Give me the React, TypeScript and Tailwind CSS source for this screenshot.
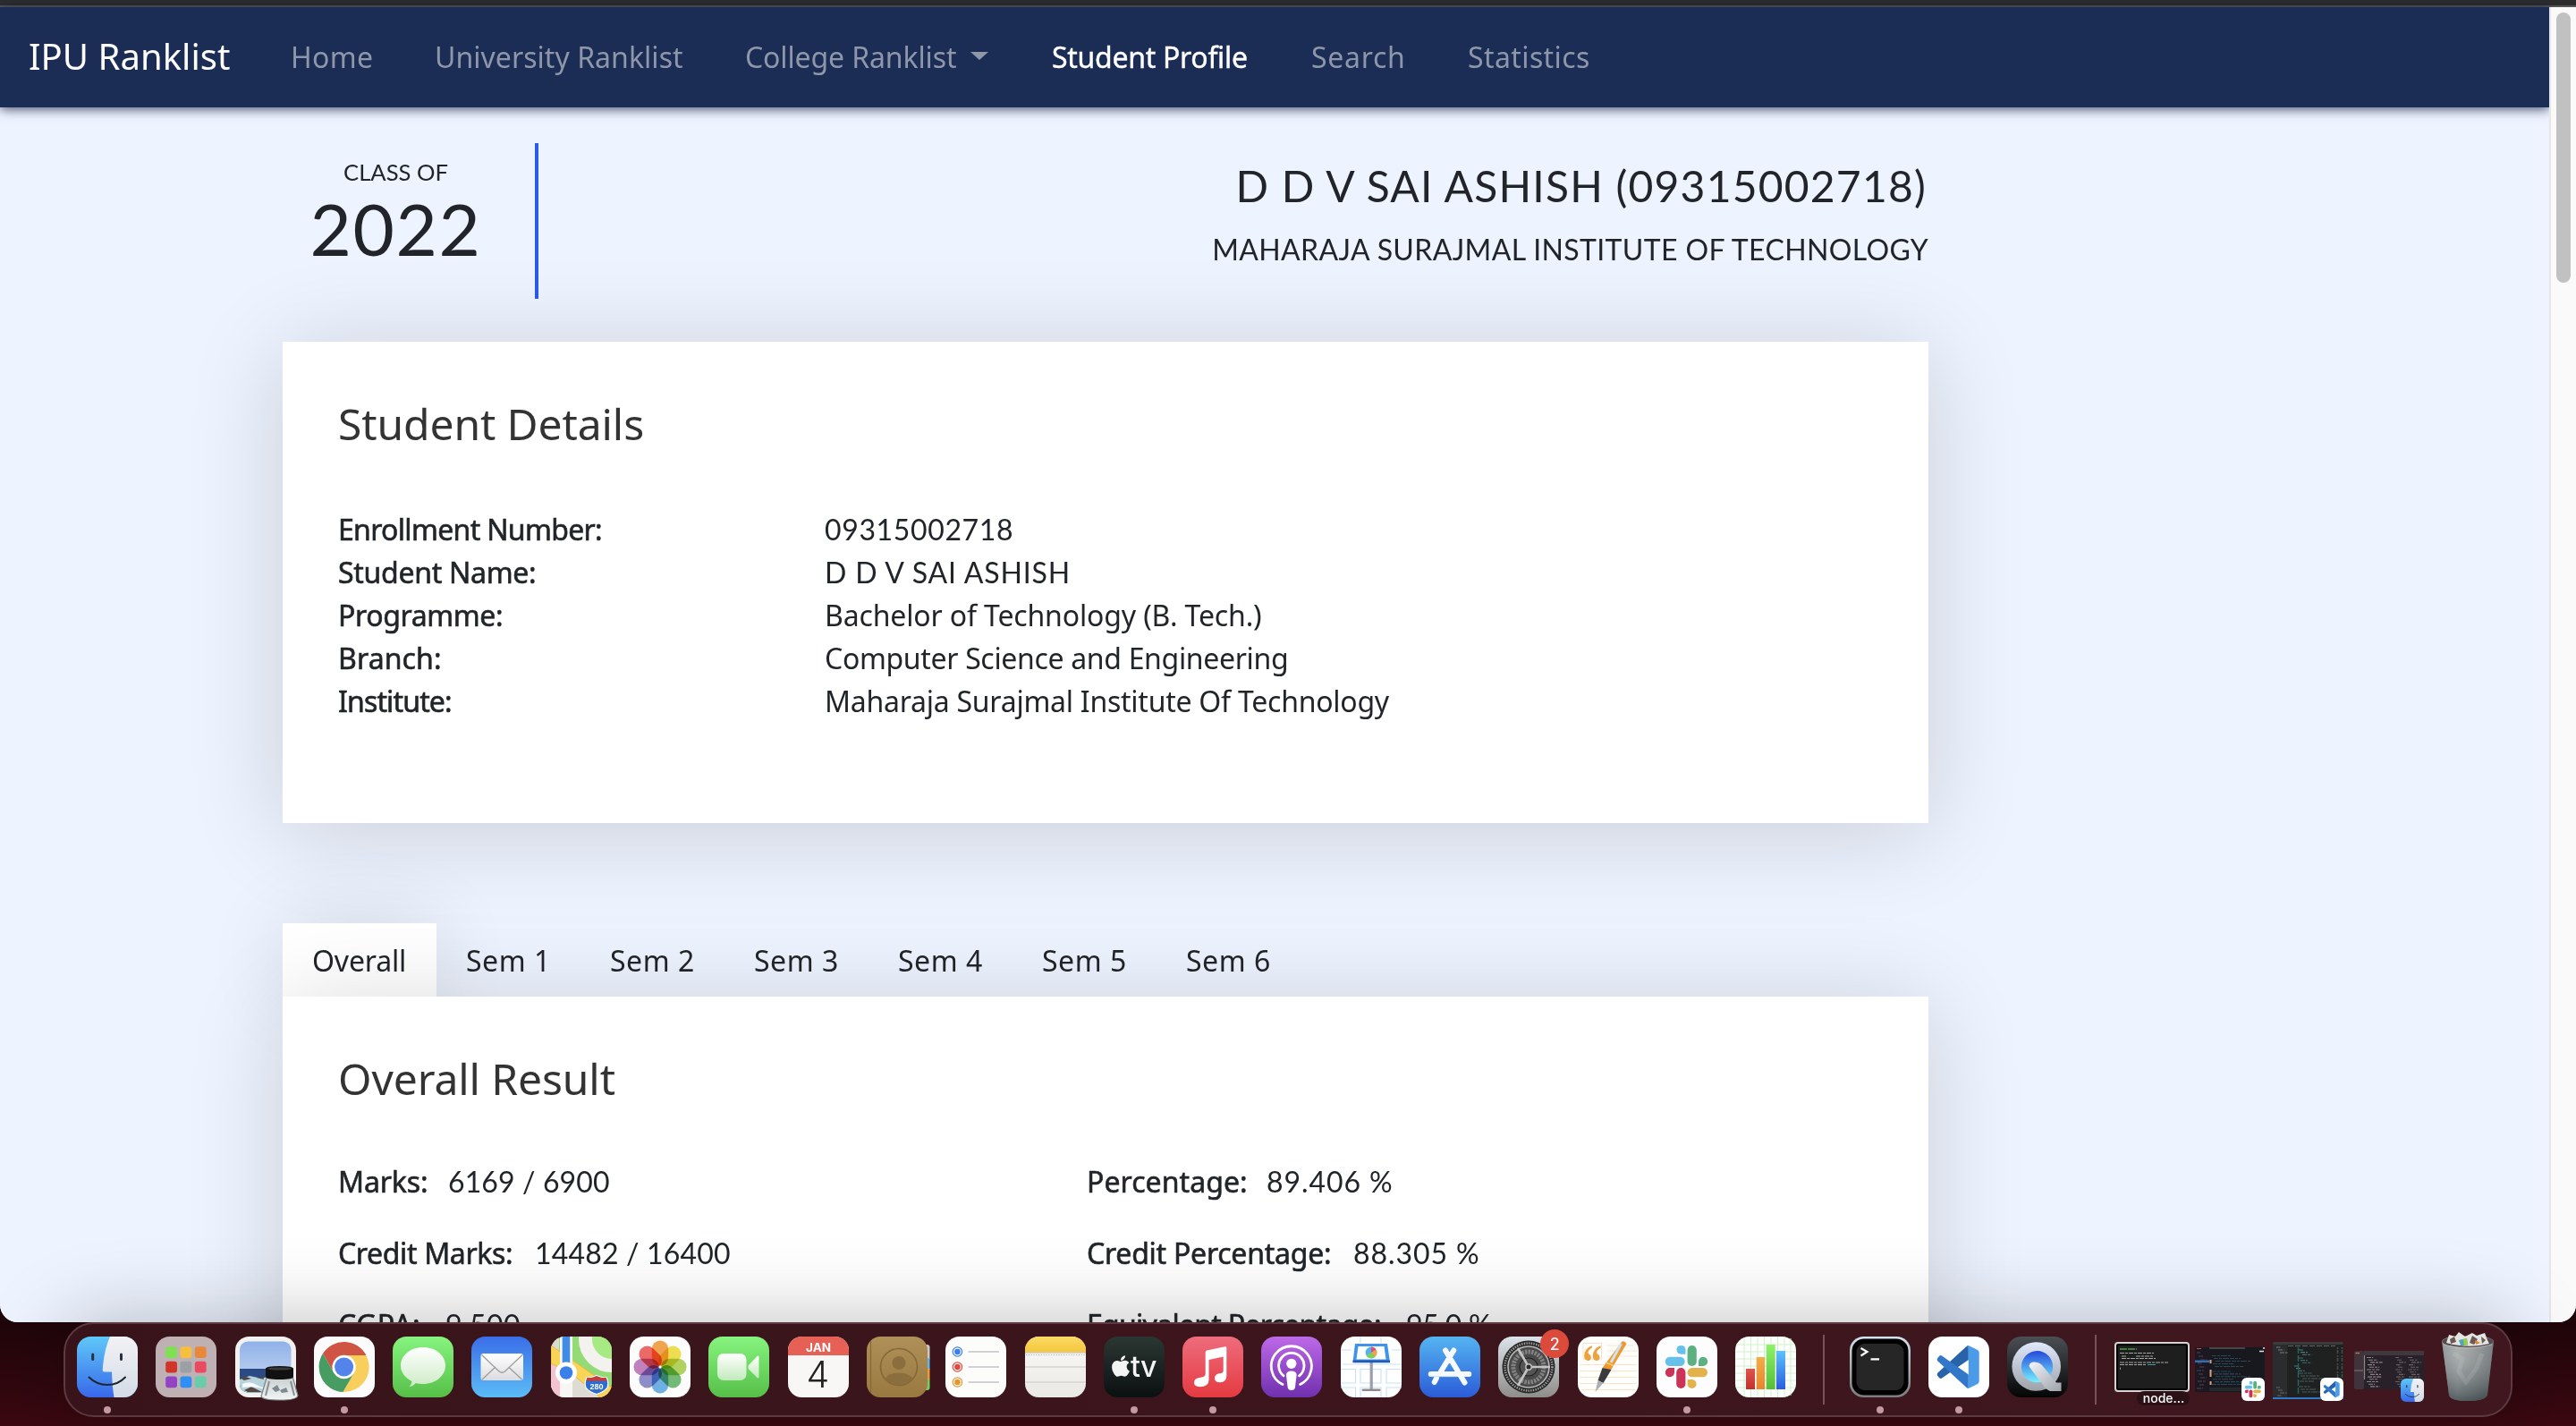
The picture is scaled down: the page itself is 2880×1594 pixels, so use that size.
import React from 'react';
import type { ReactNode } from 'react';
import { FaApple } from 'react-icons/fa';

/* ---------- page data ---------- */

const navItems = [
  { label: 'Home', cls: 'ml-[66px] w-[91px] tracking-[0.34px]' },
  { label: 'University Ranklist', cls: 'ml-[70px] w-[276px] tracking-[0.04px]' },
  { label: 'College Ranklist', cls: 'ml-[71px] w-[236px] tracking-[-0.12px]', caret: true },
  { label: 'Student Profile', cls: 'ml-[71px] w-[218px] tracking-[-0.29px]', active: true },
  { label: 'Search', cls: 'ml-[72px] w-[103px] tracking-[0.7px]' },
  { label: 'Statistics', cls: 'ml-[72px] w-[136px] tracking-[0.4px]' },
];

const details = [
  { k: 'Enrollment Number:', kc: 'tracking-[-0.68px]', v: '09315002718', vc: "font-['Lato'] tracking-[0.64px]" },
  { k: 'Student Name:', kc: 'tracking-[-0.29px]', v: 'D D V SAI ASHISH', vc: "font-['Lato'] tracking-[0.84px]" },
  { k: 'Programme:', kc: 'tracking-[-0.38px]', v: 'Bachelor of Technology (B. Tech.)', vc: 'tracking-[-0.15px]' },
  { k: 'Branch:', kc: 'tracking-[0.13px]', v: 'Computer Science and Engineering', vc: 'tracking-[-0.33px]' },
  { k: 'Institute:', kc: 'tracking-[-0.85px]', v: 'Maharaja Surajmal Institute Of Technology', vc: 'tracking-[-0.25px]' },
];

const results = [
  { k: 'Marks:', kc: 'w-[123px] tracking-[-0.12px]', v: '6169 / 6900', vc: 'tracking-[0.12px]' },
  { k: 'Percentage:', kc: 'w-[201px] tracking-[0.06px]', v: '89.406 %', vc: 'tracking-[0.92px]' },
  { k: 'Credit Marks:', kc: 'w-[220px] tracking-[-0.36px]', v: '14482 / 16400', vc: 'tracking-[0.18px]' },
  { k: 'Credit Percentage:', kc: 'w-[298px] tracking-[-0.24px]', v: '88.305 %', vc: 'tracking-[0.92px]' },
  { k: 'CGPA:', kc: 'w-[120px] tracking-[0.48px]', v: '9.500', vc: 'tracking-[0.44px]' },
  { k: 'Equivalent Percentage:', kc: 'w-[357px] tracking-[-0.72px]', v: '95.0 %', vc: 'tracking-[-0.28px]' },
];

const semesters = ['Sem 1', 'Sem 2', 'Sem 3', 'Sem 4', 'Sem 5', 'Sem 6'];

/* ---------- browser page ---------- */

function Navbar() {
  return (
    <nav className="relative flex h-28 items-center bg-[#1c2d55] pl-[32px] text-[32px] leading-[48px] text-[#8e96aa] shadow-[0_2px_12px_rgba(10,20,60,0.75)]">
      <span className="w-[227px] pb-[3px] text-[40px] leading-[60px] tracking-[0.04px] whitespace-nowrap text-white">IPU Ranklist</span>
      {navItems.map((n) => (
        <div key={n.label} className="flex items-center">
          <span className={`${n.cls} whitespace-nowrap ${n.active ? 'text-white [-webkit-text-stroke:0.4px_white]' : ''}`}>{n.label}</span>
          {n.caret && (
            <span className="-mt-1 ml-[16px] h-0 w-0 border-x-[10px] border-t-[9px] border-x-transparent border-t-[#8e96aa]" />
          )}
        </div>
      ))}
    </nav>
  );
}

function ProfileHeader() {
  return (
    <header className="flex h-[262px] items-start justify-between pt-10 font-['Lato',sans-serif]">
      <div className="h-[174px] w-[286px] border-r-4 border-[#2a5bea] pt-[13px] pr-[29px] text-center">
        <p className="text-[25.6px] leading-[38px]">CLASS OF</p>
        <p className="mt-[4px] text-[80px] leading-[80px] tracking-[1.6px]">2022</p>
      </div>
      <div className="pt-[19px] text-right whitespace-nowrap">
        <h1 className="pr-[2px] text-[48px] leading-[58px] tracking-[1.2px]">D D V SAI ASHISH (09315002718)</h1>
        <p className="mt-[18px] text-[32px] leading-[48px] tracking-[0.37px]">MAHARAJA SURAJMAL INSTITUTE OF TECHNOLOGY</p>
      </div>
    </header>
  );
}

function Card({ title, className, children }: { title: string; className: string; children: ReactNode }) {
  return (
    <section className={`relative bg-white px-[62px] pt-[63px] shadow-[0_10px_100px_rgba(0,0,0,0.16)] ${className}`}>
      <h2 className="text-[48px] leading-[58px] tracking-[-0.1px] text-[#333]">{title}</h2>
      {children}
    </section>
  );
}

const label = '[-webkit-text-stroke:0.6px_#212529]';

function Page() {
  return (
    <div className="min-w-0 flex-1 bg-[#eef4ff]">
      <Navbar />
      <main className="ml-[316px] w-[1840px] text-[32px] leading-[48px] text-[#212529]">
        <ProfileHeader />
        <Card title="Student Details" className="h-[538px]">
          <dl className="mt-[65px] grid grid-cols-[544px_1fr] whitespace-nowrap">
            {details.map((d) => (
              <React.Fragment key={d.k}>
                <dt className={`${label} ${d.kc}`}>{d.k}</dt>
                <dd className={d.vc}>{d.v}</dd>
              </React.Fragment>
            ))}
          </dl>
        </Card>
        <div className="mt-[112px] flex h-[82px] items-stretch whitespace-nowrap">
          <div className="w-[172px] bg-white pt-[18px] pl-[33px] tracking-[-0.18px] shadow-[0_0_90px_rgba(0,0,0,0.12)]">Overall</div>
          {semesters.map((s) => (
            <div key={s} className="relative w-[161px] pt-[18px] pl-[33px] tracking-[0.54px]">{s}</div>
          ))}
        </div>
        <Card title="Overall Result" className="h-[600px]">
          <div className="mt-[62px] grid grid-cols-[837px_1fr] gap-y-8 whitespace-nowrap">
            {results.map((r) => (
              <div key={r.k} className="flex">
                <span className={`${label} ${r.kc}`}>{r.k}</span>
                <span className={`font-['Lato'] ${r.vc}`}>{r.v}</span>
              </div>
            ))}
          </div>
        </Card>
      </main>
    </div>
  );
}

function BrowserWindow() {
  return (
    <div className="flex h-[1478px] flex-col overflow-hidden rounded-b-[20px] bg-[#eef4ff] font-['Noto_Sans',sans-serif]">
      <div className="h-2 shrink-0 border-b-2 border-[#5a5557] bg-[#2d2d2d]" />
      <div className="flex min-h-0 flex-1">
        <Page />
        <div className="relative w-[30px] border-l-2 border-[#e6e6e6] bg-[#fafafa] pt-[6px] pl-[6px]">
          <div className="h-[302px] w-4 rounded-full bg-[#c1c1c1]" />
        </div>
      </div>
    </div>
  );
}

/* ---------- dock icons ---------- */

function Svg({ children }: { children: ReactNode }) {
  return (
    <svg viewBox="0 0 68 68" className="block size-full overflow-visible">
      {children}
    </svg>
  );
}

function Grad({ id, a, b }: { id: string; a: string; b: string }) {
  return (
    <linearGradient id={id} x1="0" y1="0" x2="0" y2="1">
      <stop offset="0" stopColor={a} />
      <stop offset="1" stopColor={b} />
    </linearGradient>
  );
}

function Base({ fill }: { fill: string }) {
  return <rect width="68" height="68" rx="15.5" fill={fill} />;
}

const Finder = () => (
  <Svg>
    <defs>
      <Grad id="fi" a="#5fc8f8" b="#3868ea" />
      <Grad id="fw" a="#f3f2f5" b="#d3dbe6" />
    </defs>
    <Base fill="url(#fi)" />
    <path d="M37 0H52.500A15.500 15.500 0 0 1 68 15.500V52.500A15.500 15.500 0 0 1 52.500 68H41.500Q39.500 56 39 39.500H30.500Q28.500 39.500 28.700 37Q30 16 37 0Z" fill="url(#fw)" />
    <path d="M17.700 20V25.500M49.500 20V25.500" stroke="#26333f" strokeWidth="3" strokeLinecap="round" />
    <path d="M13.500 45.500Q22 54 34 54Q46 54 54 45.500" fill="none" stroke="#1c2733" strokeWidth="2" strokeLinecap="round" />
  </Svg>
);

const padColors = ['#7ee052', '#f6bf3d', '#e8883a', '#cf3528', '#9aa0a3', '#ea4a60', '#9244c4', '#2f8ff5', '#69ccab'];
const Launchpad = () => (
  <Svg>
    <Base fill="#bfb0b4" />
    {padColors.map((c, i) => (
      <rect key={c} x={11.200 + (i % 3) * 16.300} y={11.200 + Math.floor(i / 3) * 16.600} width="12.800" height="12.800" rx="3" fill={c} />
    ))}
  </Svg>
);

const Preview = () => (
  <Svg>
    <defs>
      <Grad id="pv" a="#8fb2ea" b="#cfdcf0" />
      <Grad id="pj" a="#c9cfd0" b="#f3f5f5" />
    </defs>
    <Base fill="#f3f1ef" />
    <rect x="5" y="5.500" width="57.500" height="57" rx="9" fill="url(#pv)" />
    <path d="M5 36H62.500V53.500A9 9 0 0 1 53.500 62.500H14A9 9 0 0 1 5 53.500Z" fill="#2c4a83" />
    <path d="M5 48L16 44L30 47L40 43V62.500H14A9 9 0 0 1 5 53.500Z" fill="#b7d3dc" />
    <path d="M5 46L12 45L18 47L10 49ZM10 60L18 56L30 62H14ZM24 46L31 45L32 48Z" fill="#54473f" />
    <path d="M8 53Q16 49 24 54T34 55V59Q22 55 8 57Z" fill="#f6fafb" />
    <path d="M35 46H64.500L70 66Q69 71 50 71Q31 71 29 67Z" fill="url(#pj)" stroke="#7e8484" strokeWidth="1.200" />
    <path d="M38 50L34 66M62 50L66 66" stroke="#8a9090" strokeWidth="2" />
    <path d="M41 58L47 54L50 60L45 62ZM50 60L57 57L59 62L52 63Z" fill="#7f8a90" />
    <path d="M34 36Q34 33 49.500 33Q65 33 65 36V45Q65 48 49.500 48Q34 48 34 45Z" fill="#111" />
    <ellipse cx="49.500" cy="36" rx="13" ry="1.600" fill="#3a3a3a" />
  </Svg>
);

const Chrome = () => (
  <Svg>
    <Base fill="#fbfbfb" />
    <g transform="translate(33.600 34)">
      <path d="M-23.660 -14.980A28 28 0 0 1 24.800 -13L0 -13L-11.260 6.500Z" fill="#cf5444" />
      <path d="M24.800 -13A28 28 0 0 1 -1.140 27.980L11.260 6.500L0 -13Z" fill="#f8cf5c" />
      <path d="M-1.140 27.980A28 28 0 0 1 -23.660 -14.980L-11.260 6.500L11.260 6.500Z" fill="#469c61" />
      <circle r="13.200" fill="#fff" />
      <circle r="10.500" fill="#5384ec" />
    </g>
  </Svg>
);

const Messages = () => (
  <Svg>
    <defs>
      <Grad id="ms" a="#86f47f" b="#56bf48" />
      <Grad id="mb" a="#ffffff" b="#cdebc6" />
    </defs>
    <Base fill="url(#ms)" />
    <path d="M34 12C48 12 59 21 59 32.500S48 53 34 53C31 53 28.500 52.700 26 52Q23 55.500 18.500 56.200Q21.500 53 21.500 50C14 46.300 9 40 9 32.500C9 21 20 12 34 12Z" fill="url(#mb)" />
  </Svg>
);

const Mail = () => (
  <Svg>
    <defs>
      <Grad id="ml" a="#3a6ee8" b="#5bbcf6" />
      <Grad id="me" a="#ffffff" b="#dcdcde" />
    </defs>
    <Base fill="url(#ml)" />
    <rect x="10.500" y="19" width="47.500" height="30" rx="3" fill="url(#me)" />
    <path d="M12 48L27 34M56.500 48L41.500 34M11.500 20.500L30.500 38.500Q34.200 42 38 38.500L57 20.500" fill="none" stroke="#9d9da2" strokeWidth="1.300" />
  </Svg>
);

const Maps = () => (
  <Svg>
    <defs>
      <clipPath id="mc"><rect width="68" height="68" rx="15.500" /></clipPath>
    </defs>
    <g clipPath="url(#mc)">
      <rect width="68" height="68" fill="#93db74" />
      <path d="M0 0H9V68H0Z" fill="#dcdad4" />
      <path d="M0 30L10 38V68H0Z" fill="#f3c3cf" />
      <path d="M24 34L68 66V68H24Z" fill="#dedcd2" />
      <path d="M0 10L68 57V70L55 68L24 42L0 30Z" fill="#f8d557" stroke="#eeb545" strokeWidth="1" />
      <circle cx="68" cy="3" r="29.500" fill="#a7ea83" stroke="#f4f2ef" strokeWidth="15" />
      <rect x="10" y="0" width="14" height="68" fill="#f7f6f4" />
      <rect x="12.700" y="0" width="8.500" height="40" fill="#3f8be8" />
      <circle cx="17" cy="40.500" r="12" fill="#fff" />
      <circle cx="17" cy="40.500" r="7.300" fill="#3b7fea" />
    </g>
    <path d="M40 45.500Q45 46.500 51 43.500Q57 46.500 62 45.500Q65 52 63 57Q60 61.500 51 64.500Q42 61.500 39 57Q37 52 40 45.500Z" fill="#2d6cd4" stroke="#fff" strokeWidth="1.200" />
    <path d="M40.500 45.800Q45 47 51 44.200Q57 47 61.500 45.800L62.500 49.500H39.500Z" fill="#cf3a31" />
    <text x="51" y="58.500" fontSize="9" fontWeight="700" fontFamily="Liberation Sans, sans-serif" textAnchor="middle" fill="#fff">280</text>
  </Svg>
);

const petals = ['#f29a38', '#f0dc3a', '#a9cf4a', '#62b365', '#5da6e4', '#7f7fc4', '#bb72b5', '#ee5552'];
const Photos = () => (
  <Svg>
    <Base fill="#fcfcfc" />
    <g transform="translate(34 34)">
      {petals.map((c, i) => (
        <rect key={c} x="-9.200" y="-29.500" width="18.400" height="28.500" rx="9.200" fill={c} fillOpacity="0.88" transform={`rotate(${i * 45})`} className="mix-blend-multiply" />
      ))}
      <circle r="1.500" fill="#fff" />
    </g>
  </Svg>
);

const FaceTime = () => (
  <Svg>
    <defs>
      <Grad id="ft" a="#86f47f" b="#56bf48" />
      <Grad id="fb" a="#ffffff" b="#c2eabb" />
    </defs>
    <Base fill="url(#ft)" />
    <rect x="10" y="19" width="32.500" height="30" rx="7" fill="url(#fb)" />
    <path d="M45 32L54.500 22Q56.500 20.500 56.500 23V45Q56.500 47.500 54.500 46L45 36.500Q44 34.200 45 32Z" fill="url(#fb)" />
  </Svg>
);

const Calendar = () => (
  <Svg>
    <Base fill="#f8f7f6" />
    <path d="M0 21V15.500A15.500 15.500 0 0 1 15.500 0H52.500A15.500 15.500 0 0 1 68 15.500V21Z" fill="#e66055" />
    <text x="34" y="16.500" fontSize="13.500" fontWeight="700" fontFamily="Inter, sans-serif" textAnchor="middle" fill="#fff">JAN</text>
    <text x="33.500" y="57" fontSize="41" fontWeight="300" fontFamily="Inter, sans-serif" textAnchor="middle" fill="#222">4</text>
  </Svg>
);

const Contacts = () => (
  <Svg>
    <rect x="60" y="9" width="10.500" height="18" rx="3" fill="#c9c9c9" />
    <rect x="60" y="24" width="10.500" height="13" fill="#62b7e8" />
    <rect x="60" y="36" width="10.500" height="13" fill="#ec9a3e" />
    <rect x="60" y="47" width="10.500" height="13" rx="3" fill="#74cf63" />
    <defs><Grad id="co" a="#af9058" b="#99793f" /></defs>
    <Base fill="url(#co)" />
    <path d="M4.500 5V63" stroke="#86693a" strokeWidth="1.200" />
    <circle cx="36" cy="34" r="20.500" fill="none" stroke="#84683a" strokeWidth="1.600" />
    <circle cx="36" cy="29.500" r="7.500" fill="#8b6e3d" />
    <path d="M20.500 47Q25 40.500 36 40.500T51.500 47Q45 54.500 36 54.500T20.500 47Z" fill="#8b6e3d" />
  </Svg>
);

const Reminders = () => (
  <Svg>
    <Base fill="#fcfcfb" />
    {['#3a7df0', '#e2493b', '#e8952f'].map((c, i) => (
      <g key={c}>
        <circle cx="13.400" cy={17 + i * 17} r="5.200" fill="#fff" stroke={c} strokeWidth="1.200" />
        <circle cx="13.400" cy={17 + i * 17} r="3.300" fill={c} />
        <path d={`M25.500 ${17 + i * 17}H60`} stroke="#c2c4c8" strokeWidth="1.700" />
      </g>
    ))}
  </Svg>
);

const Notes = () => (
  <Svg>
    <defs>
      <Grad id="nt" a="#fbdb66" b="#f5c63c" />
      <Grad id="nb" a="#fafaf9" b="#e9e8e4" />
    </defs>
    <Base fill="url(#nb)" />
    <path d="M0 17.500V15.500A15.500 15.500 0 0 1 15.500 0H52.500A15.500 15.500 0 0 1 68 15.500V17.500Z" fill="url(#nt)" />
    <path d="M0 18H68" stroke="#b9b5a8" strokeWidth="1" />
    <path d="M1 20.500H67" stroke="#b5b5b5" strokeWidth="1.200" strokeDasharray="1.200 1.600" />
    <path d="M0 34H68M0 51H68" stroke="#d5d4d1" strokeWidth="1.500" />
  </Svg>
);

const AppleTv = () => (
  <Svg>
    <defs><Grad id="tv" a="#2b3733" b="#0b1011" /></defs>
    <Base fill="url(#tv)" />
    <FaApple x="5.500" y="19.500" size={27} color="#f4f4f4" />
    <text x="30" y="45" fontSize="32" fontWeight="500" fontFamily="Inter, sans-serif" letterSpacing="-0.500" fill="#f4f4f4">tv</text>
  </Svg>
);

const Music = () => (
  <Svg>
    <defs><Grad id="mu" a="#ee6c7c" b="#e53a41" /></defs>
    <Base fill="url(#mu)" />
    <path d="M25.700 17.500Q25.700 16 27.200 15.600L47.600 11.200Q49.300 10.900 49.300 12.500V44Q49.300 51 42 51.300Q36 51 36 46.500Q36 41.500 43 41Q45.700 40.700 45.700 38V22.500L29.500 26V48.500Q29.500 56 19.500 56.200Q13 56 13 51.500Q13 46.500 20 45.700Q25.700 45 25.700 42Z" fill="#fff" />
  </Svg>
);

const Podcasts = () => (
  <Svg>
    <defs><Grad id="pc" a="#bd69e8" b="#7030ae" /></defs>
    <Base fill="url(#pc)" />
    <path d="M24 53.500A22.500 22.500 0 1 1 43.600 53.500" fill="none" stroke="#fff" strokeWidth="2.800" strokeLinecap="round" />
    <path d="M25 43.800A14.200 14.200 0 1 1 42.600 43.800" fill="none" stroke="#fff" strokeWidth="2.800" strokeLinecap="round" />
    <circle cx="33.800" cy="30.300" r="5.600" fill="#fff" />
    <path d="M28 43Q28 38.500 33.800 38.500T39.600 43L38 56.500Q37.500 60 33.800 60T29.600 56.500Z" fill="#fff" />
  </Svg>
);

const Keynote = () => (
  <Svg>
    <Base fill="#fff" />
    <path d="M0 15H12M0 36.500H16.500V52H0M22 52V36.500H45V52ZM51 68V57H68M0 57H16.500V68M22 68V57H45V68M68 36.500H51V52H68M22 0V7M45 0V7M57 15H68M2 31H68" fill="none" stroke="#c8e0f4" strokeWidth="1.100" />
    <rect x="32.600" y="28" width="3.200" height="32" fill="#9a9fae" />
    <rect x="23.500" y="58.500" width="21" height="2.500" rx="1.200" fill="#8c8c90" />
    <path d="M16 8H52L55 28.500H13.500Z" fill="#3f94ea" />
    <path d="M13.500 26.500H55V29.300H13.500Z" fill="#2159b8" />
    <path d="M19.500 11H48.500L50.500 25.500H17.500Z" fill="#fff" />
    <circle cx="34" cy="18" r="6.400" fill="#52b4ee" />
    <path d="M34 18V11.600A6.400 6.400 0 0 1 39.500 14.800Z" fill="#e04f78" />
    <path d="M34 18L39.500 14.800A6.400 6.400 0 0 1 38.500 22.500Z" fill="#f2a444" />
    <path d="M34 18L38.500 22.500A6.400 6.400 0 0 1 28.500 21.200Z" fill="#82cf54" />
  </Svg>
);

const AppStore = () => (
  <Svg>
    <defs><Grad id="as" a="#55b4f1" b="#2a5cd8" /></defs>
    <Base fill="url(#as)" />
    <path d="M12.700 42H55.300M38.300 15.500L24 39M19 46.500L16.700 51M29 15.500L50.500 51.500" stroke="#f6faff" strokeWidth="6" strokeLinecap="round" fill="none" />
    <path d="M12.700 44.700H42" stroke="#bcd4f4" strokeWidth="0.800" />
  </Svg>
);

const Settings = () => (
  <Svg>
    <defs><Grad id="st" a="#dbe3ea" b="#8f8d8a" /></defs>
    <Base fill="url(#st)" />
    <circle cx="34" cy="34" r="29.500" fill="#2a2a2a" />
    <circle cx="34" cy="34" r="26.500" fill="none" stroke="#a3a3a3" strokeWidth="2.500" strokeDasharray="1.300 1.400" />
    <circle cx="34" cy="34" r="23" fill="#4a4a4a" stroke="#b9b9b9" strokeWidth="1.600" />
    <circle cx="34" cy="34" r="17" fill="none" stroke="#838383" strokeWidth="5" strokeDasharray="2.400 1.200" />
    <circle cx="34" cy="34" r="10" fill="#555" stroke="#222" strokeWidth="1.200" />
    <path d="M34 34L22 13M34 34H58M34 34L22 55" stroke="#c4c4c4" strokeWidth="2.600" />
    <circle cx="34" cy="34" r="3.200" fill="#2c2c2c" stroke="#c4c4c4" strokeWidth="1.400" />
  </Svg>
);

const Pages = () => (
  <Svg>
    <Base fill="#fefefd" />
    <path d="M33 10H62M33 16H67M33 22H67M2 31.500H66M2 38.500H66M2 45.500H66M2 52.500H66M4 59.500H64" stroke="#fbe3c5" strokeWidth="1.200" />
    <rect x="6" y="7.500" width="20.500" height="17.500" fill="#fff" stroke="#f5dfc4" strokeWidth="0.900" />
    <text x="5" y="46.500" fontSize="54" fontWeight="700" fontFamily="Liberation Serif, serif" textLength="22" lengthAdjust="spacingAndGlyphs" fill="#eda23e">“</text>
    <path d="M49.500 5.500Q52.500 4.500 54.500 8L37 37.500L27.500 35Z" fill="#ee9a33" />
    <path d="M48.500 8L37 29" stroke="#cfe2ee" strokeWidth="3" />
    <path d="M37.500 37L27.500 35L22.500 49L28.500 52Z" fill="#3b3b3d" />
    <path d="M22.500 49L28.500 52L19.500 62Z" fill="#aab1b6" />
    <path d="M31 29L40 32.500" stroke="#f8cd77" strokeWidth="1.500" />
  </Svg>
);

function SlackMark() {
  return (
    <g>
      <path d="M32.500 19.700H27.500A5 4.900 0 1 1 32.500 14.800Z" fill="#66c1ea" />
      <rect x="9.700" y="22.700" width="22" height="10.300" rx="5.150" fill="#66c1ea" />
      <rect x="34.600" y="10" width="10.200" height="23" rx="5.100" fill="#5cb182" />
      <path d="M47 33V27.800A5.100 5.100 0 1 1 52.100 33Z" fill="#5cb182" />
      <path d="M20 35V40.200A5.100 5.100 0 1 1 14.900 35Z" fill="#cc3358" />
      <rect x="22.200" y="35" width="10.200" height="23" rx="5.100" fill="#cc3358" />
      <rect x="34.600" y="35" width="22.400" height="10.300" rx="5.150" fill="#e2b34a" />
      <path d="M34.600 48H39.700A5 5 0 1 1 34.600 53Z" fill="#e2b34a" />
    </g>
  );
}

function CodeMark() {
  return (
    <g>
      <path d="M44.800 10V26L15 46.500Q13.500 47.500 12 46L10 43.500Q9 42 10.500 40.500L42 11.500Z" fill="#2862a8" />
      <path d="M44.800 58V42.500L15 21.500Q13.500 20.500 12 22L10 24.500Q9 26 10.500 27.500L42 56.500Z" fill="#3277c8" />
      <path d="M44.800 10L55 15Q56.700 16 56.700 18V50Q56.700 52 55 53L44.800 58Q43 58 42.500 57Q44.800 57 44.800 54V14Q44.800 11 42.500 11Q43.500 9.700 44.800 10Z" fill="#4b9be8" />
    </g>
  );
}

const Slack = () => (<Svg><Base fill="#fdfdfd" /><SlackMark /></Svg>);
const Code = () => (<Svg><Base fill="#fff" /><CodeMark /></Svg>);

const Numbers = () => (
  <Svg>
    <defs>
      <Grad id="n1" a="#e0534f" b="#c2302f" />
      <Grad id="n2" a="#f3ad46" b="#e8842f" />
      <Grad id="n3" a="#8df26a" b="#52bf38" />
      <Grad id="n4" a="#5cc2fa" b="#2a5ce2" />
    </defs>
    <Base fill="#fdfffc" />
    <path d="M10 1V67M17.500 0V68M25 0V68M32.500 0V68M40 0V68M47.500 0V68M55 0V68M62 2V66M1 9H67M0 17H68M0 25H68M0 33H68M0 41H68M0 49H68M1 57H67" stroke="#cdeec8" strokeWidth="0.900" />
    <rect x="12" y="36" width="10" height="23" fill="url(#n1)" />
    <rect x="23.700" y="23" width="9.500" height="36" fill="url(#n2)" />
    <rect x="34.700" y="9" width="10" height="50" fill="url(#n3)" />
    <rect x="46" y="16" width="10" height="43" fill="url(#n4)" />
  </Svg>
);

const Terminal = () => (
  <Svg>
    <defs><Grad id="te" a="#d3e2ec" b="#7d7a7b" /></defs>
    <Base fill="url(#te)" />
    <rect x="2.500" y="2.500" width="63" height="63" rx="13.500" fill="#000" />
    <rect x="7.500" y="8" width="53" height="52" rx="9" fill="#262626" />
    <path d="M12.500 13L19.500 17L12.500 21.500M23.500 25.300H33" fill="none" stroke="#fff" strokeWidth="2.200" />
  </Svg>
);

const QuickTime = () => (
  <Svg>
    <defs>
      <Grad id="qb" a="#4b4f54" b="#050505" />
      <Grad id="qr" a="#dfe9fb" b="#9da1a8" />
      <Grad id="qc" a="#2748dc" b="#74f2fd" />
      <linearGradient id="qh" x1="0" y1="0" x2="1" y2="1">
        <stop offset="0" stopColor="#f2f6fb" />
        <stop offset="1" stopColor="#9ea2a9" />
      </linearGradient>
    </defs>
    <Base fill="url(#qb)" />
    <circle cx="32.700" cy="33.500" r="27.300" fill="url(#qr)" />
    <circle cx="33.500" cy="33.700" r="17.600" fill="url(#qc)" />
    <path d="M24.500 33Q25 28.500 30 28.500Q36 28.500 39 32L55 51.500H60.500V61H48Q43 59 40 54Q36 49 31 42Q26 36 24.500 33Z" fill="url(#qh)" />
  </Svg>
);

const Trash = () => (
  <svg viewBox="0 0 60 78" className="block h-[78px] w-[60px] overflow-visible">
    <defs>
      <linearGradient id="tr" x1="0" y1="0" x2="1" y2="0">
        <stop offset="0" stopColor="#868c8e" />
        <stop offset="0.300" stopColor="#a4a8a9" />
        <stop offset="0.600" stopColor="#8f9394" />
        <stop offset="1" stopColor="#676d6f" />
      </linearGradient>
      <Grad id="ts" a="rgba(255,255,255,0.1)" b="rgba(20,35,40,0.550)" />
    </defs>
    <path d="M1 10Q4 4 30 4T59 10L52 70Q50 77 30 77T9 70Z" fill="url(#tr)" />
    <path d="M1 10Q4 4 30 4T59 10L52 70Q50 77 30 77T9 70Z" fill="url(#ts)" />
    <ellipse cx="30" cy="10.500" rx="28.500" ry="6.500" fill="#54494c" />
    <path d="M6 12L9 3L16 5L20 0L27 5L35 1L40 4L49 1L52 9L54 13Q30 19 6 12Z" fill="#e4e4e2" />
    <path d="M10 8L15 5L17 11L11 13ZM35 4L41 8L37 14L32 12ZM45 5L50 9L46 13Z" fill="#6b5a52" />
    <path d="M20 9L29 7L30 15L22 15Z" fill="#4fa9b8" />
    <path d="M25 8L29 7L30 15L26 15Z" fill="#9ecb4c" />
    <path d="M38 9L44 12L39 14Z" fill="#d9873c" />
    <path d="M3 14Q30 22 57 14" fill="none" stroke="#c5c8c9" strokeWidth="1" strokeOpacity="0.600" />
    <path d="M14 24L24 30L20 44L28 56L40 40L46 24" fill="none" stroke="#d5d8d9" strokeOpacity="0.160" strokeWidth="5" />
  </svg>
);

/* ---------- dock ---------- */

type App = { Icon: () => ReactNode; running?: boolean; badge?: string };

const mainApps: App[] = [
  { Icon: Finder, running: true }, { Icon: Launchpad }, { Icon: Preview }, { Icon: Chrome, running: true },
  { Icon: Messages }, { Icon: Mail }, { Icon: Maps }, { Icon: Photos }, { Icon: FaceTime }, { Icon: Calendar },
  { Icon: Contacts }, { Icon: Reminders }, { Icon: Notes }, { Icon: AppleTv, running: true },
  { Icon: Music, running: true }, { Icon: Podcasts }, { Icon: Keynote }, { Icon: AppStore },
  { Icon: Settings, badge: '2' }, { Icon: Pages }, { Icon: Slack, running: true }, { Icon: Numbers },
];
const extraApps: App[] = [{ Icon: Terminal, running: true }, { Icon: Code, running: true }, { Icon: QuickTime }];

function AppGroup({ apps }: { apps: App[] }) {
  return (
    <div className="flex gap-[20.3px] pt-[14px]">
      {apps.map(({ Icon, running, badge }, i) => (
        <div key={i} className="relative flex w-[68px] flex-col items-center">
          <div className="size-[68px]"><Icon /></div>
          {running && <span className="mt-[10px] size-2 rounded-full bg-[#c39aa2]" />}
          {badge && (
            <span className="absolute -top-2 -right-[11px] flex size-8 items-center justify-center rounded-full bg-[#dc4a3c] font-['Inter',sans-serif] text-[18px] text-white">
              {badge}
            </span>
          )}
        </div>
      ))}
    </div>
  );
}

function Divider() {
  return <div className="mt-3 ml-[29.5px] h-[78px] w-[2px] bg-[#7a5159]" />;
}

/* Rows of tiny strokes standing for text in a minimised window. */
function Scribble({ rows, x, y, step, w, color }: { rows: number; x: number; y: number; step: number; w: number; color: string }) {
  return (
    <path
      d={Array.from({ length: rows }, (_, i) => `M${x + ((i * 7) % 5)} ${y + i * step}h${w * (0.45 + ((i * 37) % 11) / 20)}`).join('')}
      stroke={color}
      strokeWidth="1.100"
      strokeDasharray="5 1 3 1 7 1"
    />
  );
}

function MinimisedWindows() {
  return (
    <div className="flex items-start">
      <div className="relative mt-5 ml-[20px] h-[56px] w-[84px] rounded-[4px] border-2 border-[#d6d3d4] bg-black p-[2px]">
        <svg viewBox="0 0 76 48" className="block h-full w-full bg-[#1e1e1e]">
          <path d="M2 4H21" stroke="#4f9b4a" strokeWidth="1.300" strokeDasharray="8 1" />
          <path d="M2 8.500H40M4 12H10M20 12H40M4 14.500H42M2 19H56M2 21.500H32" stroke="#a5a5a5" strokeWidth="1" strokeDasharray="5 1 3 1" />
          <path d="M33 21.500H42" stroke="#3f9aa5" strokeWidth="1" />
          <path d="M2.500 24.500V27" stroke="#aaa" strokeWidth="0.800" />
        </svg>
        <span className="absolute -right-[2px] -bottom-[17px] w-[59px] rounded-[9px] bg-[#2b1016] pl-[7px] font-['Inter',sans-serif] text-[14px] leading-4 font-medium text-white">
          node...
        </span>
      </div>

      <div className="relative mt-[26px] ml-[6.5px] h-[60px] w-[78px]">
        <svg viewBox="0 0 78 50" className="block h-[50px] w-[78px]">
          <rect width="78" height="50" rx="2" fill="#17191e" />
          <rect width="16" height="50" rx="2" fill="#1c1720" />
          <rect x="16" y="0" width="40" height="2" fill="#454548" />
          <rect y="14.500" width="16" height="2.500" fill="#2e6fb8" />
          <path d="M2 1.500H7" stroke="#b55" strokeWidth="1" />
          <rect x="16" y="45" width="60" height="4" fill="#24272c" />
          <Scribble rows={11} x={2} y={6} step={4} w={9} color="#4a4650" />
          <Scribble rows={5} x={19} y={9.500} step={3} w={46} color="#2c4557" />
          <Scribble rows={6} x={19} y={27} step={2.900} w={46} color="#2c4557" />
          <path d="M17.500 14V18M17.500 25V33M17.500 38V42" stroke="#d9a184" strokeWidth="2" />
          <path d="M72 4.500H77M76 1H78" stroke="#e4e4e4" strokeWidth="1.500" />
        </svg>
        <svg viewBox="0 0 68 68" className="absolute top-[34px] right-0 size-[26px]"><Base fill="#fff" /><SlackMark /></svg>
      </div>

      <div className="relative mt-5 ml-[9px] h-[66px] w-[79px]">
        <svg viewBox="0 0 79 64" className="block h-[64px] w-[79px]">
          <rect width="79" height="64" rx="2" fill="#1f2121" />
          <rect width="16" height="62" fill="#2a2c2d" />
          <rect width="79" height="3" rx="1.500" fill="#3b3b3d" />
          <rect y="62" width="79" height="2.200" fill="#2f79c4" />
          <path d="M17 4.500H70" stroke="#707070" strokeWidth="0.900" strokeDasharray="6 2" />
          <Scribble rows={3} x={4} y={6} step={3} w={10} color="#7d7d7d" />
          <Scribble rows={4} x={4} y={51} step={3} w={9} color="#666" />
          <Scribble rows={3} x={29} y={9} step={2.600} w={12} color="#49807c" />
          <Scribble rows={3} x={29} y={18} step={2.600} w={12} color="#3e6f6c" />
          <Scribble rows={3} x={24} y={27} step={2.600} w={9} color="#49807c" />
          <Scribble rows={4} x={29} y={35} step={3} w={32} color="#4e5f60" />
          <Scribble rows={3} x={29} y={50} step={3} w={28} color="#4e5f60" />
          <path d="M28.500 6V60" stroke="#24645f" strokeWidth="1.500" strokeDasharray="7 2" />
          <path d="M72.500 6V60M77.500 6V56" stroke="#454d47" strokeWidth="1.600" strokeDasharray="2 1 4 2" />
        </svg>
        <svg viewBox="0 0 68 68" className="absolute top-[40px] right-0 size-[26px]"><Base fill="#fff" /><CodeMark /></svg>
      </div>

      <div className="relative mt-[30px] ml-[12px] h-[57px] w-[78px]">
        <svg viewBox="0 0 78 43" className="block h-[43px] w-[78px]">
          <rect width="78" height="43" rx="2" fill="#292129" />
          <rect width="11" height="43" rx="2" fill="#40333b" />
          <rect x="11" width="67" height="5" fill="#41373d" />
          <path d="M1.500 2.500H6" stroke="#c6853f" strokeWidth="1.200" />
          <path d="M11.500 5V32" stroke="#8b8489" strokeWidth="1.200" />
          <rect x="0" y="21" width="10" height="2" fill="#62545b" />
          <Scribble rows={13} x={14} y={7.500} step={2.700} w={16} color="#8a8388" />
          <Scribble rows={13} x={46} y={7.500} step={2.700} w={9} color="#665f64" />
          <Scribble rows={13} x={60} y={7.500} step={2.700} w={13} color="#665f64" />
        </svg>
        <div className="absolute top-[31px] right-0 size-[26px]"><Finder /></div>
      </div>

      <div className="mt-[9px] ml-[19px]"><Trash /></div>
    </div>
  );
}

function Dock() {
  return (
    <div className="relative ml-[71px] flex h-[106px] w-[2738px] items-start rounded-[34px] border-2 border-[#5d3a41] bg-[#3b151c] bg-linear-to-r from-[#38141a] to-[#40171e] pl-[13px] shadow-[0_0_90px_rgba(0,0,0,0.26)]">
      <AppGroup apps={mainApps} />
      <Divider />
      <div className="ml-[28px]"><AppGroup apps={extraApps} /></div>
      <Divider />
      <MinimisedWindows />
    </div>
  );
}

export default function App() {
  return (
    <div className="h-[1594px] w-[2880px] overflow-hidden bg-linear-to-b from-[#1c0509] from-92% to-[#3c0811]">
      <BrowserWindow />
      <Dock />
    </div>
  );
}
